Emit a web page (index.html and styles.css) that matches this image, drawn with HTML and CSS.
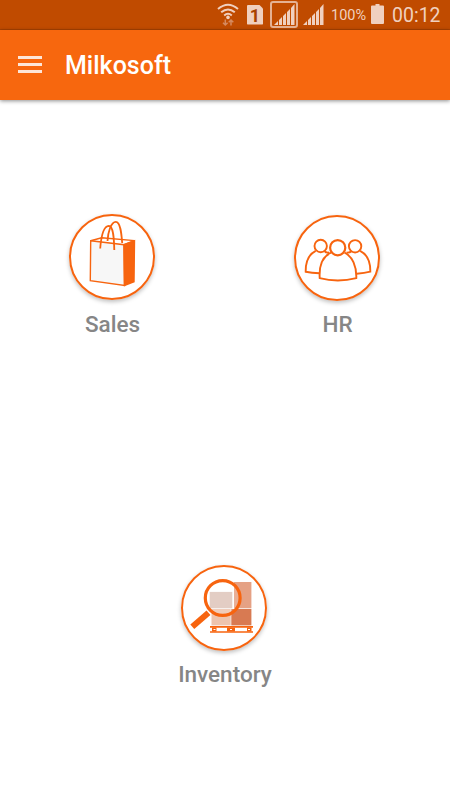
FILE: index.html
```html
<!DOCTYPE html>
<html lang="en">
<head>
    <meta charset="UTF-8">
    <meta name="viewport" content="width=device-width, initial-scale=1.0">
    <title>Milkosoft</title>
    <link rel="stylesheet" href="styles.css">
</head>
<body>
    <div class="status-bar">
        <svg class="wifi-icon" width="22" height="24" viewBox="0 0 22 24" fill="none">
            <path d="M1 6Q11 -2.5 21 6M4.2 9.3Q11 3.6 17.8 9.3M7.2 12.4Q11 9.2 14.8 12.4" stroke="#f0d0bf" stroke-width="2"/>
            <circle cx="11" cy="14.4" r="1.8" fill="#f0d0bf"/>
            <path d="M8.3 16.5V22M6 19.7L8.3 22L10.6 19.7M14 22.5V16.5M11.7 19.3L14 17L16.3 19.3" stroke="#d58a60" stroke-width="1.5"/>
        </svg>
        <span class="sim-icon">1</span>
        <span class="signal-box">
            <svg width="21" height="21" viewBox="0 0 21 21" fill="#f0d0bf">
                <path d="M0 21L4 17V21zM5 16L8 13V21H5zM9 12L12 9V21H9zM13 8L16 5V21H13zM17 4L20.5 0V21H17z"/>
            </svg>
        </span>
        <svg class="signal-icon" width="21" height="21" viewBox="0 0 21 21" fill="#f0d0bf">
            <path d="M0 21L4 17V21zM5 16L8 13V21H5zM9 12L12 9V21H9zM13 8L16 5V21H13zM17 4L20.5 0V21H17z"/>
        </svg>
        <span class="battery-text">100%</span>
        <svg class="battery-icon" width="13" height="20" viewBox="0 0 13 20" fill="#f0d0bf">
            <path d="M4.5 0H8.5V1.5H12Q13 1.5 13 2.5V19Q13 20 12 20H1Q0 20 0 19V2.5Q0 1.5 1 1.5H4.5z"/>
        </svg>
        <span class="clock">00:12</span>
    </div>

    <header class="navbar">
        <button class="menu-icon" aria-label="Menu">
            <span></span>
            <span></span>
            <span></span>
        </button>
        <h1 class="title">Milkosoft</h1>
    </header>

    <main class="modules">
        <a class="module" href="#">
            <span class="module-icon sales-icon">
                <svg width="86" height="86" viewBox="0 0 86 86" fill="none" stroke="#f7640f" stroke-width="1.4">
                    <path d="M21.7 26.7L32.7 23.7L65.5 26.6L55 30.7"/>
                    <path d="M21.7 26.7L55 30.7L55.5 71.5L21.3 66.7z" fill="#f7f7f7"/>
                    <path d="M55 30.7L65.5 26.7L65 67.7L55.5 71.5z" fill="#f7640f"/>
                    <path d="M31.2 34.5C32 24 34.5 12 39.8 11.8C44.5 11.8 45 25 45.3 36" stroke-width="1.8"/>
                    <path d="M38.5 27C39 18 42 7.8 46.8 7.8C51.5 7.8 52.5 20 53.2 29" stroke-width="1.8"/>
                </svg>
            </span>
            <span class="module-name">Sales</span>
        </a>
        <a class="module" href="#">
            <span class="module-icon">
                <svg width="86" height="86" viewBox="-0.5 0.5 86 86" fill="none" stroke="#f7640f" stroke-width="1.9">
                    <circle cx="26.2" cy="31.5" r="6.2"/>
                    <circle cx="60.6" cy="31.8" r="6.2"/>
                    <path d="M25 58.8Q17 58.5 11.2 57.2C11 46 14 40 21.2 36.3M30 36.6Q31.5 38.5 34.5 38"/>
                    <path d="M62.2 59.2Q70 58.8 75.8 57.2C76 46 73 40 65.6 36.3M57 36.8Q55 38.5 52 38"/>
                    <path d="M36.5 38.2C28 42 24.5 52 25.2 63.6Q43.2 68.4 61.8 63.6C62.2 52 58 42 50 38.2"/>
                    <circle cx="43.2" cy="33.2" r="7.6" stroke-width="2.2"/>
                </svg>
            </span>
            <span class="module-name">HR</span>
        </a>
        <a class="module module-wide" href="#">
            <span class="module-icon">
                <svg width="86" height="86" viewBox="-0.5 0.5 86 86" fill="none">
                    <rect x="28.2" y="27.4" width="22.6" height="16.4" fill="#dfc5ba"/>
                    <rect x="52.5" y="17.5" width="17.4" height="26.3" fill="#e5a184"/>
                    <rect x="30" y="44.5" width="19.2" height="16.4" fill="#edc4ae"/>
                    <rect x="49.8" y="44.5" width="20.1" height="16.4" fill="#d87a52"/>
                    <path d="M28.5 62.3H71.5M28.5 67.5H71.5" stroke="#f7640f" stroke-width="1.7"/>
                    <path d="M30.5 65H35M45.5 65H53.5M65.5 65H70" stroke="#f7640f" stroke-width="4"/>
                    <path d="M32 65H34M48.5 65H50.5M66.5 65H68.5" stroke="#fff" stroke-width="1.2"/>
                    <circle cx="41.2" cy="33.5" r="17.4" fill="#fff" fill-opacity=".15" stroke="#f7640f" stroke-width="3.2"/>
                    <path d="M10.8 62.2L27 48.2" stroke="#f7640f" stroke-width="6"/>
                </svg>
            </span>
            <span class="module-name">Inventory</span>
        </a>
    </main>
</body>
</html>
```

FILE: styles.css
```css
body {
    font-family: Roboto, sans-serif;
    margin: 0;
    padding: 0;
    background-color: #ffffff;
}
.status-bar {
    display: flex;
    align-items: center;
    box-sizing: border-box;
    height: 30px;
    padding-left: 217px;
    background-color: #c04b00;
    border-bottom: 1px solid #ac4200;
    color: #f0d0bf;
    white-space: nowrap;
}
.wifi-icon {
    margin-top: 1px;
}
.sim-icon {
    width: 16px;
    height: 20px;
    margin-left: 8px;
    border-radius: 1px;
    background-color: #f0d0bf;
    clip-path: polygon(0 0, 12px 0, 100% 4px, 100% 100%, 0 100%);
    color: #a84200;
    font-size: 18px;
    font-weight: bold;
    line-height: 21px;
    text-align: center;
}
.signal-box {
    display: flex;
    align-items: center;
    justify-content: center;
    box-sizing: border-box;
    width: 28px;
    height: 27px;
    margin-left: 7px;
    border: 2px solid #e5b193;
    border-radius: 3px;
}
.signal-icon {
    margin-left: 5px;
}
.battery-text {
    width: 36px;
    margin-left: 7px;
    font-size: 14.5px;
    line-height: 28px;
    padding-top: 2px;
}
.battery-icon {
    margin-left: 4px;
    margin-bottom: 1px;
}
.clock {
    margin-left: 8px;
    font-size: 19.5px;
    line-height: 28px;
    padding-top: 2px;
}
.navbar {
    display: flex;
    align-items: center;
    height: 70px;
    padding-left: 18px;
    background-color: #f7670e;
    box-shadow: 0 1px 4px rgba(0, 0, 0, 0.45);
}
.menu-icon {
    display: flex;
    flex-direction: column;
    gap: 4px;
    width: 24px;
    margin-bottom: 1px;
    padding: 0;
    border: none;
    background: none;
    cursor: pointer;
}
.menu-icon span {
    height: 3px;
    background-color: #fde6d8;
}
.title {
    margin: 0 0 0 23px;
    color: #ffffff;
    font-size: 25px;
    font-weight: 500;
}
.modules {
    display: grid;
    grid-template-columns: 1fr 1fr;
    grid-template-rows: 350px 350px;
}
.module {
    display: flex;
    flex-direction: column;
    align-items: center;
    padding-top: 115px;
    color: #868686;
    text-decoration: none;
}
.module-wide {
    grid-column: 1 / 3;
}
.module-icon {
    box-sizing: border-box;
    width: 86px;
    height: 86px;
    margin-right: 1px;
    border: 2px solid #f7640f;
    border-radius: 50%;
    box-shadow: 0 2px 4px rgba(0, 0, 0, 0.25);
}
.module-wide .module-icon {
    margin-right: 2px;
}
.sales-icon {
    margin-top: -1px;
    margin-bottom: 1px;
}
.module-icon svg {
    display: block;
    margin: -2px;
}
.module-name {
    margin-top: 9px;
    font-size: 22.5px;
    font-weight: 500;
    line-height: 28px;
}
```
